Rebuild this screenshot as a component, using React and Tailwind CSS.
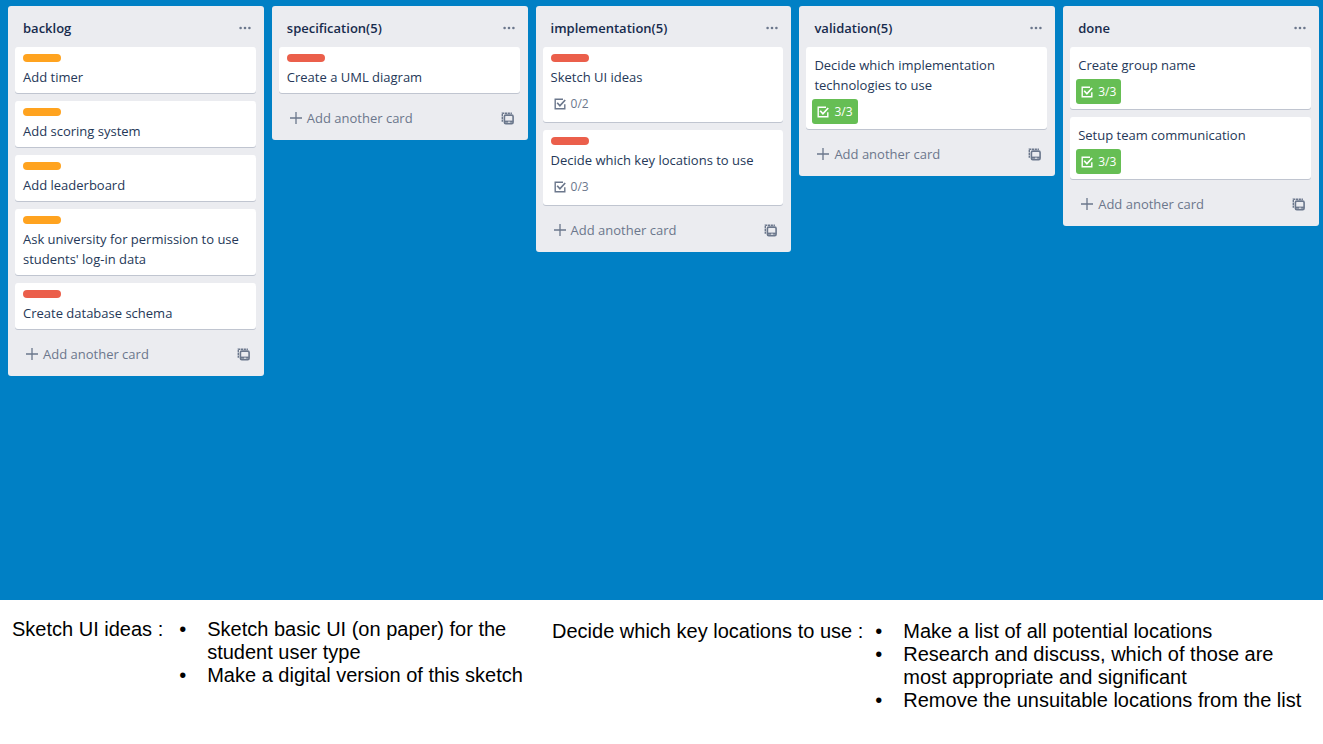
const LISTS = [
  {
    title: "backlog",
    cards: [
      { text: "Add timer", label: "orange" },
      { text: "Add scoring system", label: "orange" },
      { text: "Add leaderboard", label: "orange" },
      { text: "Ask university for permission to use students' log-in data", label: "orange" },
      { text: "Create database schema", label: "red" },
    ],
  },
  { title: "specification(5)", cards: [{ text: "Create a UML diagram", label: "red" }] },
  {
    title: "implementation(5)",
    cards: [
      { text: "Sketch UI ideas", label: "red", progress: "0/2" },
      { text: "Decide which key locations to use", label: "red", progress: "0/3" },
    ],
  },
  {
    title: "validation(5)",
    cards: [{ text: "Decide which implementation technologies to use", progress: "3/3", complete: true }],
  },
  {
    title: "done",
    cards: [
      { text: "Create group name", progress: "3/3", complete: true },
      { text: "Setup team communication", progress: "3/3", complete: true },
    ],
  },
];

function CheckIcon() {
  return (
    <svg viewBox="0 0 12 12" className="size-3 shrink-0" fill="none" stroke="currentColor" strokeWidth="1.4" aria-hidden="true">
      <path d="M9 1.2H1.2v9.6h9.6V6.2" />
      <path d="M3.2 4.8l2.7 3L11.2 2" strokeWidth="1.7" />
    </svg>
  );
}

function PlusIcon() {
  return (
    <svg viewBox="0 0 12 12" className="size-3 shrink-0" fill="none" stroke="currentColor" strokeWidth="1.3" aria-hidden="true">
      <path d="M6 0v12M0 6h12" />
    </svg>
  );
}

function DotsIcon() {
  return (
    <svg viewBox="0 0 12 4" className="h-1 w-3" fill="currentColor" aria-hidden="true">
      <circle cx="1.6" cy="2" r="1.3" />
      <circle cx="6" cy="2" r="1.3" />
      <circle cx="10.4" cy="2" r="1.3" />
    </svg>
  );
}

function TemplateIcon() {
  return (
    <svg viewBox="0 0 13 13" className="size-[13px]" fill="none" stroke="currentColor" aria-hidden="true">
      <path d="M1.3 9.8V1.2h9.6" strokeWidth="1.4" strokeDasharray="2.2 .6" />
      <rect x="3.4" y="3.1" width="8.7" height="8.5" rx="1.4" strokeWidth="1.6" />
      <path d="M3.6 9.6h8.3" strokeWidth="2" />
      <path d="M7 10.2h2.2" stroke="#ebecf0" strokeWidth="1" />
    </svg>
  );
}

function Card({ card }) {
  return (
    <li className={`rounded-[3px] bg-white px-2 shadow-[0_1px_0_#c0c5d0] ${card.label ? "pt-[7px] pb-1.5" : "pt-2 pb-[5px]"}`}>
      {card.label && (
        <div className={`mb-[5px] h-2 w-[38px] rounded-full ${card.label === "red" ? "bg-[#eb5f4b]" : "bg-[#ffa31f]"}`} />
      )}
      <p>{card.text}</p>
      {card.progress && (
        <div
          className={`mt-1 -ml-0.5 flex h-[25px] w-fit items-center gap-[5px] rounded-[3px] px-[5px] text-xs ${
            card.complete ? "bg-[#66be54] text-white" : "text-[#6b778c]"
          }`}
        >
          <CheckIcon />
          <span>{card.progress}</span>
        </div>
      )}
    </li>
  );
}

function List({ list }) {
  return (
    <section className="rounded-[3px] bg-[#ebecf0] pr-2 pl-[7px]">
      <header className="flex h-[41px] items-center justify-between pt-0.5 pr-[5px] pl-2">
        <h2 className="font-semibold text-[#172b4d]">{list.title}</h2>
        <button type="button" aria-label={`${list.title} actions`} className="text-[#6b778c]">
          <DotsIcon />
        </button>
      </header>
      <ul className="flex flex-col gap-2">
        {list.cards.map((card) => (
          <Card key={card.text} card={card} />
        ))}
      </ul>
      <footer className="flex h-[47px] items-center justify-between pt-[3px] pr-1.5 pl-[11px] text-[#6b778c]">
        <button type="button" className="flex items-center gap-[5px]">
          <PlusIcon />
          Add another card
        </button>
        <button type="button" aria-label="Create from template">
          <TemplateIcon />
        </button>
      </footer>
    </section>
  );
}

function Note({ title, items, className, listClassName }) {
  return (
    <section className={`flex ${className}`}>
      <h3 className="shrink-0 whitespace-nowrap">{title}</h3>
      <ul className={listClassName}>
        {items.map((item) => (
          <li key={item} className="flex">
            <span className="w-7 shrink-0">•</span>
            <span>{item}</span>
          </li>
        ))}
      </ul>
    </section>
  );
}

export default function App() {
  return (
    <div className="flex min-h-screen flex-col bg-white">
      <main className="grid flex-1 grid-cols-5 items-start gap-2 bg-[#0080c5] pt-1.5 pr-1 pb-8 pl-2 font-['Open_Sans',sans-serif] text-[13px] leading-5 text-[#253858]">
        {LISTS.map((list) => (
          <List key={list.title} list={list} />
        ))}
      </main>
      <div className="grid grid-cols-[540px_1fr] px-3 pt-[18px] pb-8 font-['Liberation_Sans',Arial,sans-serif] text-xl leading-[23px] text-black">
        <Note
          title="Sketch UI ideas :"
          items={["Sketch basic UI (on paper) for the student user type", "Make a digital version of this sketch"]}
          className="pr-3"
          listClassName="ml-4"
        />
        <Note
          title="Decide which key locations to use :"
          items={[
            "Make a list of all potential locations",
            "Research and discuss, which of those are most appropriate and significant",
            "Remove the unsuitable locations from the list",
          ]}
          className="pt-[2px]"
          listClassName="ml-3"
        />
      </div>
    </div>
  );
}
